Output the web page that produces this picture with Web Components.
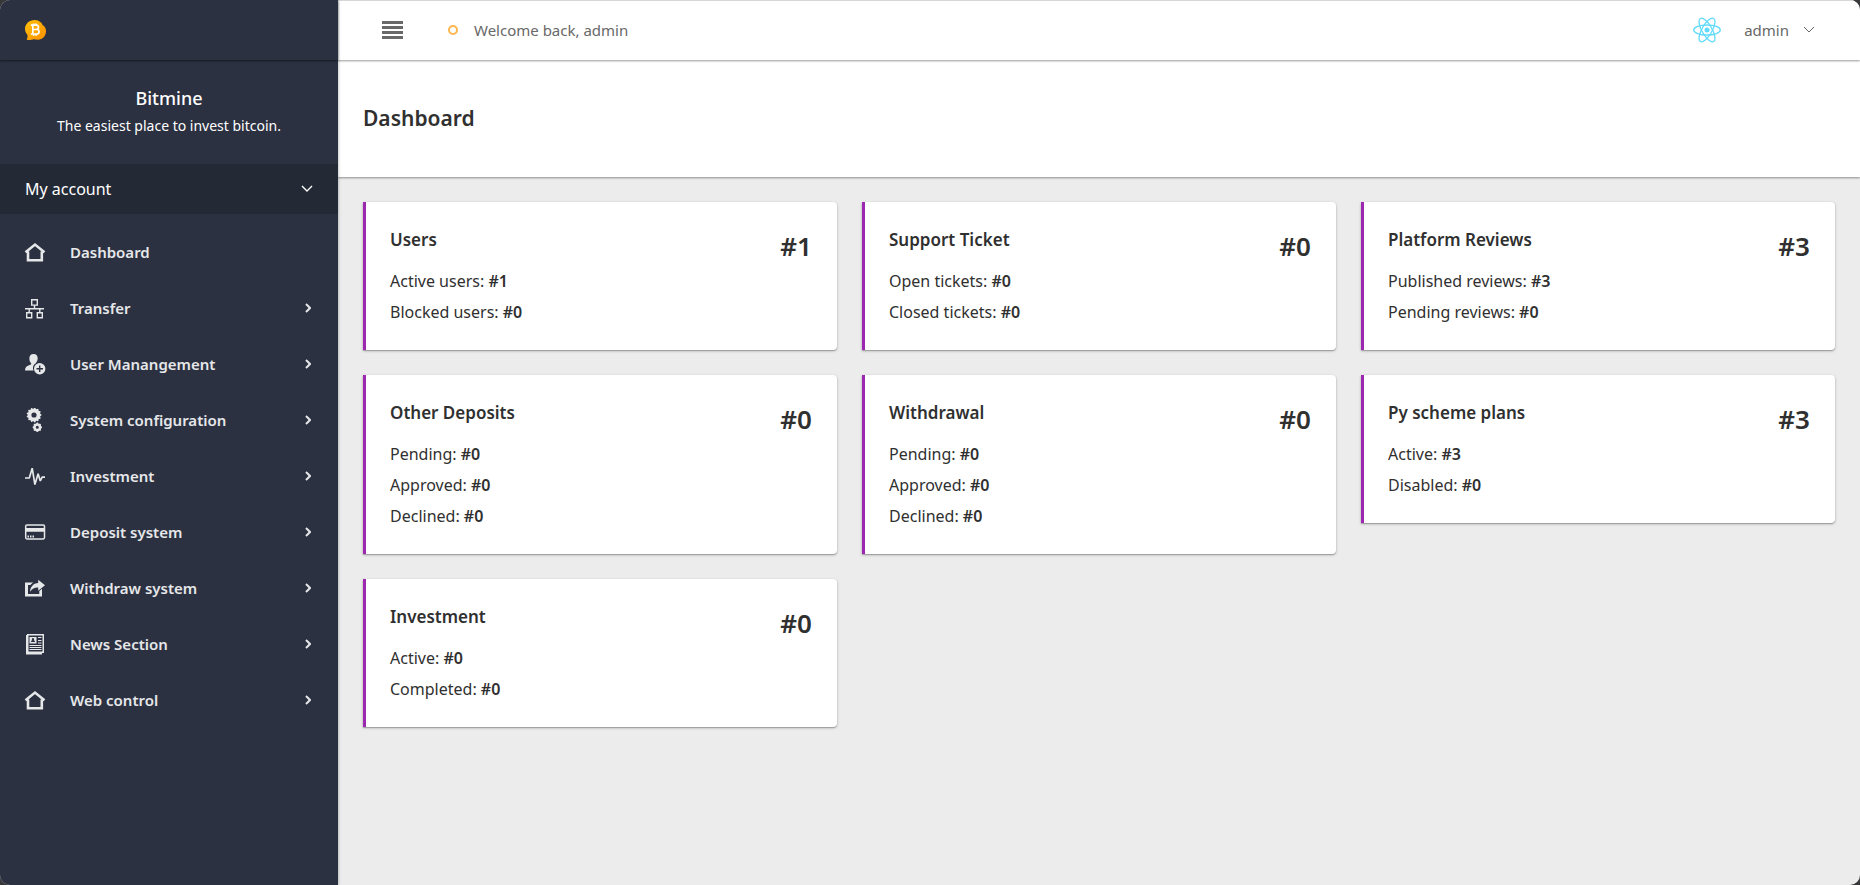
<!DOCTYPE html>
<html lang="en">
<head>
<meta charset="utf-8">
<title>Bitmine - Dashboard</title>
<style>
  html { background: #38383a; }
  body { margin: 0; font-family: "Noto Sans", "Open Sans", sans-serif; font-size: 16px; color: #303030; }
</style>
</head>
<body>
<bm-app>
  <bm-sidebar slot="side" name="Bitmine" tagline="The easiest place to invest bitcoin." account="My account">
    <bm-nav-item icon="home">Dashboard</bm-nav-item>
    <bm-nav-item icon="tree" sub>Transfer</bm-nav-item>
    <bm-nav-item icon="user" sub>User Manangement</bm-nav-item>
    <bm-nav-item icon="gears" sub>System configuration</bm-nav-item>
    <bm-nav-item icon="pulse" sub>Investment</bm-nav-item>
    <bm-nav-item icon="card" sub>Deposit system</bm-nav-item>
    <bm-nav-item icon="share" sub>Withdraw system</bm-nav-item>
    <bm-nav-item icon="news" sub>News Section</bm-nav-item>
    <bm-nav-item icon="home" sub>Web control</bm-nav-item>
  </bm-sidebar>
  <bm-topbar slot="top" user="admin">Welcome back, admin</bm-topbar>
  <bm-page-title slot="title">Dashboard</bm-page-title>
  <bm-card heading="Users" total="#1">
    <bm-stat value="#1">Active users:</bm-stat>
    <bm-stat value="#0">Blocked users:</bm-stat>
  </bm-card>
  <bm-card heading="Support Ticket" total="#0">
    <bm-stat value="#0">Open tickets:</bm-stat>
    <bm-stat value="#0">Closed tickets:</bm-stat>
  </bm-card>
  <bm-card heading="Platform Reviews" total="#3">
    <bm-stat value="#3">Published reviews:</bm-stat>
    <bm-stat value="#0">Pending reviews:</bm-stat>
  </bm-card>
  <bm-card heading="Other Deposits" total="#0">
    <bm-stat value="#0">Pending:</bm-stat>
    <bm-stat value="#0">Approved:</bm-stat>
    <bm-stat value="#0">Declined:</bm-stat>
  </bm-card>
  <bm-card heading="Withdrawal" total="#0">
    <bm-stat value="#0">Pending:</bm-stat>
    <bm-stat value="#0">Approved:</bm-stat>
    <bm-stat value="#0">Declined:</bm-stat>
  </bm-card>
  <bm-card heading="Py scheme plans" total="#3">
    <bm-stat value="#3">Active:</bm-stat>
    <bm-stat value="#0">Disabled:</bm-stat>
  </bm-card>
  <bm-card heading="Investment" total="#0">
    <bm-stat value="#0">Active:</bm-stat>
    <bm-stat value="#0">Completed:</bm-stat>
  </bm-card>
</bm-app>

<script>
const gear = (cx, cy, r, teeth, hole) => {
  let d = '';
  for (let i = 0; i < teeth * 4; i++) {
    const a = (i - 0.5) / (teeth * 4) * Math.PI * 2;
    const q = (i % 4 < 2) ? r : r * 0.86;
    d += (i ? 'L' : 'M') + (cx + q * Math.cos(a)).toFixed(2) + ' ' + (cy + q * Math.sin(a)).toFixed(2);
  }
  return `<path fill-rule="evenodd" d="${d}ZM${cx - hole} ${cy}a${hole} ${hole} 0 1 0 ${hole * 2} 0a${hole} ${hole} 0 1 0 ${-hole * 2} 0Z"/>`;
};
/* Menu glyphs, each on a 24 x 24 grid */
const ICONS = {
  home: '<path fill="none" stroke="currentColor" stroke-width="2.6" d="M2.500 12.200 12 4.600l9.500 7.600M5 11.500V20.300H18.800V11.500"/>',
  tree: '<g fill="none" stroke="currentColor" stroke-width="1.400"><path d="M8.700 3.700h5.600v5.400H8.700zM3.700 16.700h5v5h-5zM14.300 16.700h5v5h-5zM11.500 9.100v3.600M2 12.700h19M6.200 12.700v4M16.800 12.700v4"/></g>',
  user: '<path d="M10.500 2c3 0 4.300 2 4.200 4.600-.1 2.200-1 3.600-2 4.600a6 6 0 0 0-2.200 7.300H2c0-2.500 1-4 3.500-5l2.300-1c.7-.4.6-1 .1-1.600C6.700 9.700 6.400 8 6.400 6.400 6.400 3.800 7.600 2 10.500 2z"/><path fill-rule="evenodd" d="M16.700 11a5.700 5.700 0 1 1 0 11.400 5.700 5.700 0 0 1 0-11.400zM16 13.500V16h-2.500v1.400H16V20h1.400v-2.600H20V16h-2.600v-2.500z"/>',
  gears: gear(11, 7, 7.400, 13, 2.600) + gear(14.300, 19.300, 4.700, 8, 1.500),
  pulse: '<path fill="none" stroke="currentColor" stroke-width="1.700" stroke-linejoin="bevel" d="M2 14h4.300l2.900-9.800 2.700 16.300 3.200-10.700 2.200 7.200 1.800-3.800H22"/>',
  card: '<rect x="2.700" y="4.900" width="18.800" height="14" rx="1.300" fill="none" stroke="currentColor" stroke-width="1.500"/><path d="M2.500 8h19.200v3.700H2.500zM4.500 15.500h1.500v2H4.500zM7 15.500h1.500v2H7zM9.500 15.500H11v2H9.500z"/>',
  share: '<path d="M2 6.500h8.500c-1.500.7-2.400 1.600-3 2.500H5v9h11.300v-3l2.700-2.200V20.500H2z"/><path d="M15.200 3.800 22 9.300l-6.800 5.500v-3.300c-3.300-.2-5.700.8-8.200 4.200.4-4.700 3.200-8.300 8.200-8.600z"/>',
  news: '<path fill-rule="evenodd" d="M4 2H21V21H19V22.500H3V3H4zM5.500 3.500V19.500H19.500V3.500z"/><path fill-rule="evenodd" d="M6.500 5h7v6.500h-7zM10 6a1.300 1.300 0 0 0-.7 2.300c-.8.2-1.300.8-1.300 1.700h4c0-.9-.5-1.500-1.300-1.700A1.300 1.300 0 0 0 10 6z"/><path d="M15 5h3.500v1H15zM15 8h3.500v1H15zM15 10.500h3.500v1H15zM6.500 13h12v1h-12zM6.500 15h12v1h-12zM6.500 17h12v1h-12z"/>'
};

const define = (name, render) => customElements.define(name, class extends HTMLElement {
  connectedCallback() {
    if (this.shadowRoot) return;
    this.attachShadow({ mode: 'open' }).innerHTML = render(this);
  }
});

define('bm-app', () => `
<style>
  :host { display: grid; grid-template-columns: 338px 1fr; min-height: 100vh; background: #ececec; border-radius: 10px; overflow: hidden; }
  .body { display: flex; flex-direction: column; min-width: 0; }
  main { display: grid; grid-template-columns: repeat(3, minmax(0, 1fr)); gap: 25px; padding: 25px; align-items: start; }
</style>
<slot name="side"></slot>
<div class="body">
  <slot name="top"></slot>
  <slot name="title"></slot>
  <main><slot></slot></main>
</div>`);

define('bm-sidebar', el => `
<style>
  :host { display: block; background: #2b3141; color: #fff; box-shadow: 0 0 3px rgba(0,0,0,.35); z-index: 2; }
  .brand { display: flex; align-items: center; height: 60px; padding: 0 25px; box-shadow: 0 1px 2px rgba(0,0,0,.5); }
  .brand a { display: flex; }
  .intro { padding: 24px 0 25px; text-align: center; }
  h2 { margin: 0; font-size: 18px; line-height: 28px; font-weight: 500; }
  p { margin: 0; font-size: 14px; line-height: 27px; }
  .account { display: flex; width: 100%; height: 50px; padding: 0 25px; align-items: center; justify-content: space-between; border: 0; background: #242936; color: #fff; font: inherit; }
  nav { padding-top: 10px; }
</style>
<div class="brand"><a href="#" aria-label="Bitmine">
  <svg width="22" height="22" viewBox="0 0 22 22">
    <defs><linearGradient id="g" x1="0" y1="0" x2="1" y2="1"><stop offset="0" stop-color="#ffc107"/><stop offset="1" stop-color="#ff8f00"/></linearGradient></defs>
    <path fill="url(#g)" d="M9.500 1C13.500 1 16.500 3 17.800 6.300 20 7.600 21 9.700 21 12.200 21 17 17.700 20.700 13 20.700c-1.700 0-3 0-4.200-.4-1.600.6-4 .9-6.300.6-.8-.1-.9-.7-.5-1.300.7-1.200.7-2.500.3-3.800C.7 13.800 0 11.800 0 9.800 0 5 4.200 1 9.500 1z"/>
    <path fill="none" stroke="#fff" stroke-width="1.700" d="M5.800 6.200h5.500a2.100 2.100 0 0 1 0 4.300H7.800h4a2.200 2.200 0 0 1 0 4.500H5.800M7.800 6.200V15M8.700 4.500v2M11.200 4.500v2M8.700 15v1.800M11.200 15v1.800"/>
  </svg></a></div>
<div class="intro"><h2>${el.getAttribute('name')}</h2><p>${el.getAttribute('tagline')}</p></div>
<button class="account" type="button">${el.getAttribute('account')}
  <svg width="12" height="8" viewBox="0 0 12 8" fill="none" stroke="currentColor" stroke-width="1.400"><path d="M1 1l5 5 5-5"/></svg>
</button>
<nav><slot></slot></nav>`);

define('bm-nav-item', el => `
<style>
  :host { display: block; }
  a { display: flex; align-items: center; height: 56px; padding: 0 27px 0 23px; color: #e6e7e9; font-size: 15px; font-weight: 600; text-decoration: none; }
  .label { flex: 1; padding-left: 23px; }
</style>
<a href="#">
  <svg width="24" height="24" viewBox="0 0 24 24" fill="currentColor">${ICONS[el.getAttribute('icon')]}</svg>
  <span class="label"><slot></slot></span>
  ${el.hasAttribute('sub') ? '<svg width="6" height="10" viewBox="0 0 6 10" fill="none" stroke="currentColor" stroke-width="2"><path d="M1 1l4 4-4 4"/></svg>' : ''}
</a>`);

define('bm-topbar', el => `
<style>
  :host { display: flex; align-items: center; justify-content: space-between; height: 60px; padding: 0 45px 0 44px; background: #fff; color: #686868; font-size: 15px;
    box-shadow: inset 0 1px #d6d6d6, 0 1px 2px rgba(0,0,0,.4); position: relative; z-index: 1; }
  .left, .user { display: flex; align-items: center; }
  button { display: flex; align-items: center; border: 0; padding: 0; background: none; color: inherit; font: inherit; }
  .dot { box-sizing: border-box; width: 10px; height: 10px; margin: 0 16px 0 45px; border: 2px solid #ffb64d; border-radius: 50%; }
  .user svg:first-child { margin-right: 23px; }
  .user svg:last-child { margin-left: 14px; }
</style>
<div class="left">
  <button type="button" aria-label="Toggle menu"><svg width="21" height="18" viewBox="0 0 21 18" fill="#686868"><path d="M0 0h21v3H0zM0 5h21v3H0zM0 10h21v3H0zM0 15h21v3H0z"/></svg></button>
  <span class="dot"></span><span><slot></slot></span>
</div>
<button class="user" type="button">
  <svg width="28" height="26" viewBox="-14 -13 28 26" fill="none" stroke="#61dafb" stroke-width="1.300">
    <circle r="2.500" fill="#61dafb" stroke="none"/>
    <ellipse rx="13.300" ry="5"/><ellipse rx="13.300" ry="5" transform="rotate(60)"/><ellipse rx="13.300" ry="5" transform="rotate(120)"/>
  </svg>${el.getAttribute('user')}
  <svg width="12" height="8" viewBox="0 0 12 8" fill="none" stroke="currentColor" stroke-width="1"><path d="M1 1l5 5 5-5"/></svg>
</button>`);

define('bm-page-title', () => `
<style>
  :host { display: block; padding: 42px 25px 43px; background: #fff; box-shadow: 0 1px 2px rgba(0,0,0,.4); }
  h1 { margin: 0; font-size: 21px; line-height: 32px; font-weight: 600; }
</style>
<h1><slot></slot></h1>`);

define('bm-card', el => `
<style>
  :host { display: flex; justify-content: space-between; padding: 25px 25px 22px 24px; border-left: 3px solid #9c27b0; border-radius: 0 4px 4px 0; background: #fff;
    box-shadow: 0 1px 3px rgba(0,0,0,.25), 0 1px 1px rgba(0,0,0,.2); }
  h2 { margin: 0 0 13px; font-size: 17px; line-height: 26px; font-weight: 600; }
  .total { font-size: 26px; line-height: 38px; font-weight: 600; }
</style>
<section><h2>${el.getAttribute('heading')}</h2><slot></slot></section>
<span class="total">${el.getAttribute('total')}</span>`);

define('bm-stat', el => `
<style>
  :host { display: block; line-height: 31px; }
  b { font-weight: 600; }
</style>
<slot></slot> <b>${el.getAttribute('value')}</b>`);
</script>
</body>
</html>
